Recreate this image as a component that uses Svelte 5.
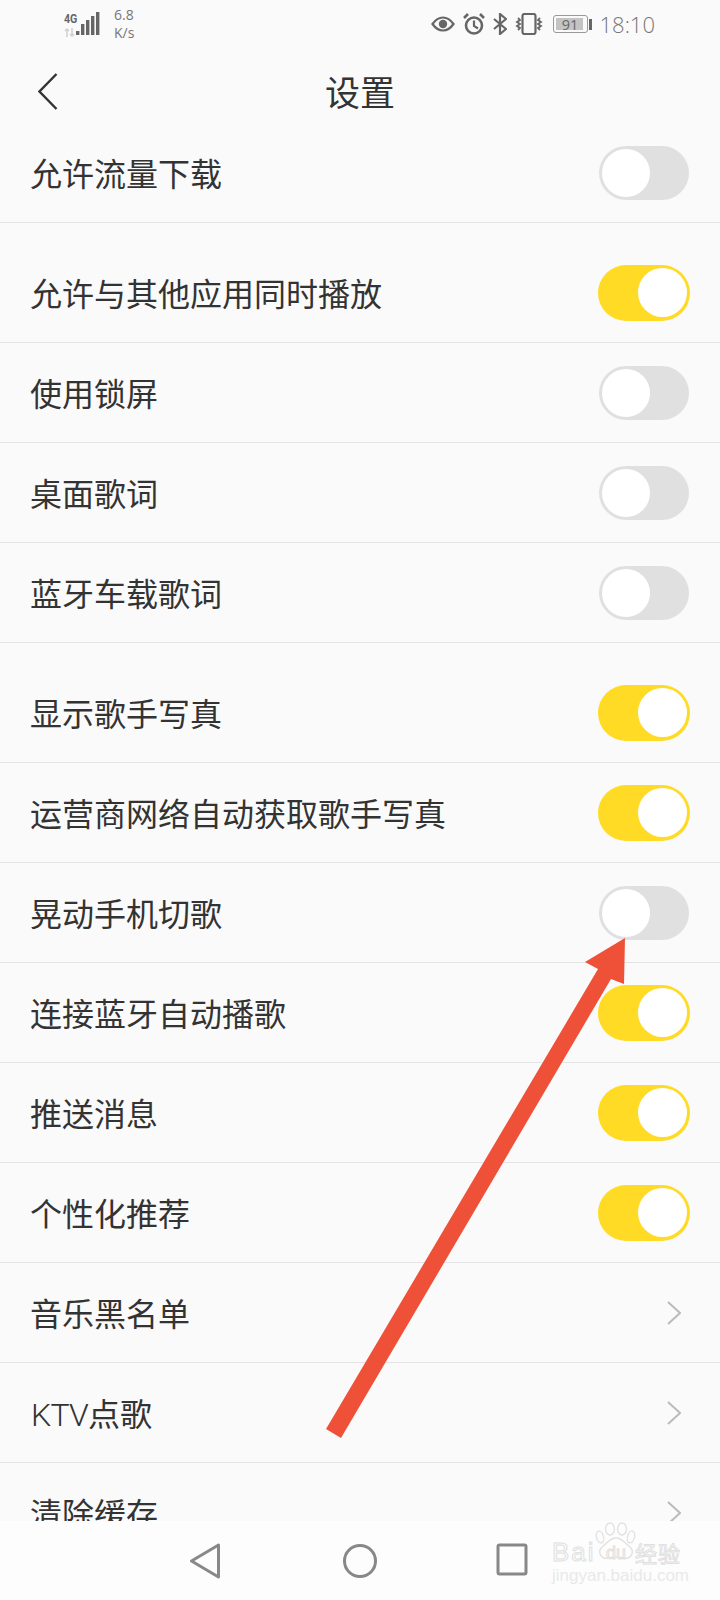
<script>
  // gap: true puts the 20px blank band above a row
  const rows = [
    { label: "允许流量下载", on: false },
    { label: "允许与其他应用同时播放", on: true, gap: true },
    { label: "使用锁屏", on: false },
    { label: "桌面歌词", on: false },
    { label: "蓝牙车载歌词", on: false },
    { label: "显示歌手写真", on: true, gap: true },
    { label: "运营商网络自动获取歌手写真", on: true },
    { label: "晃动手机切歌", on: false },
    { label: "连接蓝牙自动播歌", on: true },
    { label: "推送消息", on: true },
    { label: "个性化推荐", on: true },
    { label: "音乐黑名单", link: true },
    { latin: "KTV", label: "点歌", link: true },
    { label: "清除缓存", link: true },
  ];
</script>

<div class="phone">
  <div class="status">
    <div class="left">
      <div class="net">
        <span class="g4">4G</span>
        <svg class="updown" width="12" height="9" viewBox="0 0 12 9">
          <path d="M3 9V1M1 3l2-2 2 2M8 0v8M6 6l2 2 2-2" fill="none" stroke="#d2d2d2" stroke-width="1.6" />
        </svg>
      </div>
      <svg class="signal" width="24" height="24" viewBox="0 0 24 24">
        <rect x="0" y="19" width="3.4" height="4" fill="#666" />
        <rect x="5" y="12" width="3.4" height="11" fill="#666" />
        <rect x="10" y="8" width="3.4" height="15" fill="#666" />
        <rect x="15" y="4" width="3.4" height="19" fill="#666" />
        <rect x="20" y="0" width="3.4" height="23" fill="#666" />
      </svg>
      <div class="speed"><span>6.8</span><span>K/s</span></div>
    </div>
    <div class="right">
      <svg width="24" height="16" viewBox="0 0 24 16">
        <path d="M1.500 8C5 3 8.500 1.500 12 1.500S19 3 22.500 8C19 13 15.500 14.500 12 14.500S5 13 1.500 8Z" fill="none" stroke="#666" stroke-width="2.200" />
        <circle cx="12" cy="8" r="4.200" fill="#666" />
      </svg>
      <svg width="22" height="22" viewBox="0 0 22 22">
        <circle cx="11" cy="12.500" r="8" fill="none" stroke="#666" stroke-width="2.600" />
        <path d="M11 7.500V13l4 2.500" fill="none" stroke="#666" stroke-width="2.200" />
        <path d="M1 5l4-4M21 5l-4-4" fill="none" stroke="#666" stroke-width="2.600" />
      </svg>
      <svg width="14" height="22" viewBox="0 0 14 22">
        <path d="M1 6l12 10-6 5V1l6 5L1 16" fill="none" stroke="#666" stroke-width="2.200" />
      </svg>
      <svg width="28" height="22" viewBox="0 0 28 22">
        <rect x="7.500" y="1" width="13" height="20" rx="2" fill="none" stroke="#666" stroke-width="2.200" />
        <path d="M3 5l2 2-3 2 3 2-3 2 3 2-2 2M25 5l-2 2 3 2-3 2 3 2-3 2 2 2" fill="none" stroke="#666" stroke-width="1.800" />
      </svg>
      <div class="battery">
        <div class="cell"><div class="level"></div><span>91</span></div>
        <div class="cap"></div>
      </div>
      <span class="time">18:10</span>
    </div>
  </div>

  <header>
    <svg class="back" width="20" height="37" viewBox="0 0 20 37">
      <path d="M18.500 1L1.500 18.500 18.500 36" fill="none" stroke="#333" stroke-width="2.400" />
    </svg>
    <h1>设置</h1>
  </header>

  <div class="list">
    {#each rows as row}
      <div class="row" class:gap={row.gap}>
        <span class="label">{#if row.latin}<span class="latin">{row.latin}</span>{/if}{row.label}</span>
        {#if row.link}
          <svg class="chevron" width="14" height="24" viewBox="0 0 14 24">
            <path d="M1 1l12 11L1 23" fill="none" stroke="#bbb" stroke-width="2" />
          </svg>
        {:else}
          <div class="toggle" class:on={row.on}><div class="knob"></div></div>
        {/if}
      </div>
    {/each}
  </div>

  <nav>
    <svg width="32" height="36" viewBox="0 0 32 36">
      <path d="M29.500 2V34L2.500 18Z" fill="none" stroke="#888" stroke-width="3" stroke-linejoin="round" />
    </svg>
    <svg width="36" height="36" viewBox="0 0 36 36">
      <circle cx="18" cy="18" r="15.500" fill="none" stroke="#888" stroke-width="3" />
    </svg>
    <svg width="32" height="34" viewBox="0 0 32 34">
      <rect x="2" y="2" width="28" height="29" rx="1.500" fill="none" stroke="#888" stroke-width="3" />
    </svg>
  </nav>

  <!-- the arrow and the watermark lie over the screenshot -->
  <svg class="arrow" width="720" height="1600" viewBox="0 0 720 1600">
    <path d="M326 1429L341 1438 611 979 624 984 625 938 585 962 598 969Z" fill="#ef5138" />
  </svg>

  <div class="mark">
    <svg class="paw" width="44" height="44" viewBox="0 0 44 44">
      <g fill="none" stroke="#e2e2e2" stroke-width="1.400">
        <ellipse cx="5" cy="15" rx="3.500" ry="6" transform="rotate(-15 5 15)" />
        <ellipse cx="15" cy="7" rx="4.500" ry="6" />
        <ellipse cx="27" cy="7" rx="4.500" ry="6" />
        <ellipse cx="36" cy="15" rx="3.500" ry="6" transform="rotate(15 36 15)" />
        <path d="M21 16C28 16 30 22 35 25C40 30 36 38 28 36C24 35 18 35 14 36C6 38 2 30 7 25C12 22 14 16 21 16Z" />
      </g>
    </svg>
    <div class="brand">Bai</div>
    <div class="du">du</div>
    <div class="jy">经验</div>
    <div class="url">jingyan.baidu.com</div>
  </div>
</div>

<style>
  :global(body) {
    margin: 0;
    background: #fafafa;
  }
  .phone {
    position: relative;
    width: 720px;
    height: 1600px;
    overflow: hidden;
    display: flex;
    flex-direction: column;
    background: #fafafa;
    font-family: "Noto Sans CJK SC", "Noto Sans", sans-serif;
    color: #333;
  }
  .status {
    height: 50px;
    flex: none;
    display: flex;
    justify-content: space-between;
    padding: 0 65px 0 64px;
    color: #777;
    font-family: "Open Sans", "Noto Sans", sans-serif;
  }
  .left {
    display: flex;
    align-items: flex-start;
  }
  .net {
    width: 12px;
    padding-top: 12px;
    display: flex;
    flex-direction: column;
  }
  .g4 {
    font: bold 12.500px/13px "Roboto", sans-serif;
    color: #666;
    height: 15px;
    transform: scaleX(0.85);
    transform-origin: left;
  }
  .updown {
    margin-top: 1px;
  }
  .signal {
    margin: 12px 0 0 0;
  }
  .speed {
    margin-left: 14px;
    padding-top: 6px;
    display: flex;
    flex-direction: column;
    font-size: 14px;
    line-height: 18px;
  }
  .right {
    display: flex;
    align-items: center;
    height: 48px;
    gap: 8px;
  }
  .battery {
    display: flex;
    align-items: center;
    margin-left: 2px;
  }
  .cell {
    position: relative;
    width: 29px;
    height: 12px;
    border: 1px solid #999;
    border-radius: 3px;
    padding: 2px;
    font-size: 14.500px;
    line-height: 13px;
    text-align: center;
    color: #666;
  }
  .level {
    position: absolute;
    left: 2px;
    top: 2px;
    bottom: 2px;
    width: 27px;
    background: #c4c4c4;
  }
  .cell span {
    position: relative;
  }
  .cap {
    width: 3px;
    height: 11px;
    margin-left: 1px;
    background: #666;
  }
  .time {
    font-size: 22px;
    font-weight: 300;
  }
  header {
    height: 73px;
    padding-top: 7px;
    box-sizing: border-box;
    flex: none;
    display: flex;
    align-items: center;
    justify-content: center;
    position: relative;
  }
  .back {
    position: absolute;
    left: 38px;
    top: 23px;
  }
  h1 {
    margin: 0;
    font-size: 35px;
    font-weight: 400;
  }
  .list {
    flex: 1;
    min-height: 0;
    overflow: hidden;
  }
  .row {
    height: 100px;
    box-sizing: border-box;
    padding: 0 31px 0 30px;
    display: flex;
    align-items: center;
    justify-content: space-between;
    border-bottom: 1px solid #e4e4e4;
  }
  .row.gap {
    margin-top: 20px;
  }
  .label {
    font-size: 32px;
    font-weight: 400;
    margin-top: -2px;
  }
  .latin {
    font-family: "Roboto", sans-serif;
    font-weight: 300;
    letter-spacing: -0.800px;
    margin-left: 1px;
  }
  .chevron {
    margin-right: 8px;
  }
  .toggle {
    position: relative;
    width: 90px;
    height: 54px;
    border-radius: 27px;
    background: #e0e0e0;
  }
  .knob {
    position: absolute;
    left: 3px;
    top: 3px;
    width: 48px;
    height: 48px;
    border-radius: 50%;
    background: #fff;
  }
  .toggle.on {
    width: 92px;
    height: 56px;
    border-radius: 28px;
    margin-right: -1px;
    background: #ffdb26;
  }
  .toggle.on .knob {
    left: 40px;
    top: 3px;
    width: 49px;
    height: 49px;
  }
  nav {
    height: 79px;
    flex: none;
    background: #fdfdfd;
    display: flex;
    align-items: flex-start;
    padding: 22px 0 0 189px;
    box-sizing: border-box;
    position: relative;
  }
  nav svg:nth-child(2) {
    margin-left: 121px;
  }
  nav svg:nth-child(3) {
    margin-left: 118px;
  }
  .arrow {
    position: absolute;
    left: 0;
    top: 0;
    pointer-events: none;
  }
  .mark {
    position: absolute;
    left: 552px;
    top: 1522px;
    width: 130px;
    height: 62px;
    font-family: "Liberation Sans", sans-serif;
  }
  .paw {
    position: absolute;
    left: 43px;
    top: 0;
  }
  .brand,
  .du,
  .jy {
    position: absolute;
    white-space: nowrap;
    color: #fdfdfd;
    -webkit-text-stroke: 1px #e0e0e0;
  }
  .brand {
    top: 15px;
    left: 0;
    font-size: 26px;
    line-height: 30px;
    letter-spacing: 2px;
  }
  .du {
    top: 21px;
    left: 54px;
    font-size: 18px;
    line-height: 20px;
  }
  .jy {
    top: 17px;
    left: 83px;
    font-family: "Noto Sans CJK SC", sans-serif;
    font-size: 22px;
    line-height: 26px;
    letter-spacing: 1px;
  }
  .url {
    position: absolute;
    top: 45px;
    left: 0;
    font-size: 17px;
    line-height: 18px;
    white-space: nowrap;
    color: #e9e9e9;
  }
</style>
